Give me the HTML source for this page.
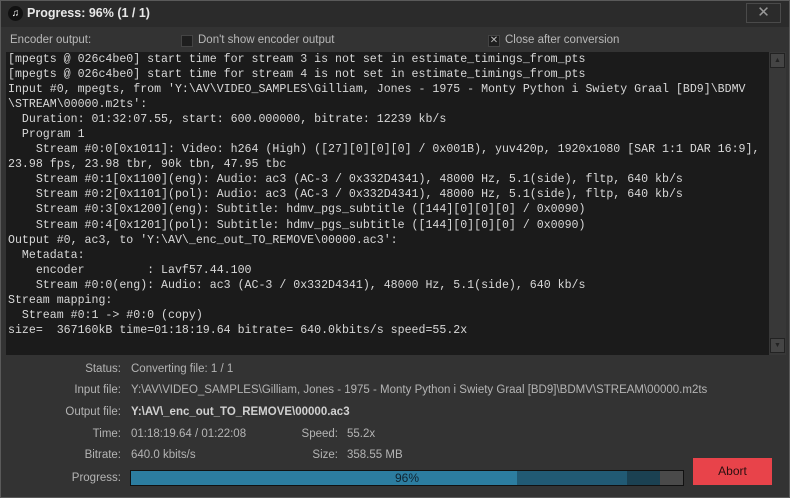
<!DOCTYPE html>
<html><head><style>
*{margin:0;padding:0;box-sizing:border-box}
body{width:790px;height:498px;background:#2e2e2e;font-family:"Liberation Sans",sans-serif;color:#c8c8c8;position:relative;overflow:hidden}
.win{position:absolute;left:0;top:0;width:790px;height:498px;border:1px solid #5a5a5a;background:#333}
.title{position:absolute;left:0;top:0;width:788px;height:26px;background:#2b2b2b}
.tt{position:absolute;left:26px;top:5px;font-size:12.5px;font-weight:bold;color:#e8e8e8}
.ico{position:absolute;left:7px;top:5px;width:15px;height:15px;border-radius:50%;background:#111;color:#fff;font-size:10px;text-align:center;line-height:15px}
.close{position:absolute;left:745px;top:2px;width:35px;height:20px;border:1px solid #4a4a4a;color:#999;text-align:center;font-size:15px;line-height:18px}
.lbl{position:absolute;font-size:11.5px;color:#b8b8b8}
.cb{position:absolute;width:12px;height:12px;background:#1e1e1e;border:1px solid #444}
.out{position:absolute;left:5px;top:51px;width:763px;height:303px;background:#1b1b1b;font-family:"Liberation Mono",monospace;font-size:11.6px;line-height:15.05px;color:#d8d8d8;padding:0 0 0 2px;white-space:pre}
.sb{position:absolute;left:768px;top:51px;width:17px;height:303px;background:#383838}
.sbb{position:absolute;left:1px;width:15px;height:15px;background:#454545;border:1px solid #222;color:#222;font-size:7px;text-align:center;line-height:13px}
.r{position:absolute;font-size:11.5px;color:#b4b4b4;text-align:right;width:120px;left:0}
.v{position:absolute;font-size:11.5px;color:#b4b4b4;left:130px}
.bar{position:absolute;left:129px;top:469px;width:554px;height:16px;border:1px solid #111;background:#4a4a4a}
.abort{position:absolute;left:692px;top:457px;width:79px;height:27px;background:#e8434a;color:#2a1010;font-size:12px;text-align:center;line-height:27px}
</style></head><body>
<div class="win">
<div class="title"><div class="ico">♫</div><div class="tt">Progress: 96% (1 / 1)</div><div class="close">✕</div></div>
<div class="lbl" style="left:9px;top:33px">Encoder output:</div>
<div class="cb" style="left:180px;top:34px"></div>
<div class="lbl" style="left:197px;top:33px">Don't show encoder output</div>
<div class="cb" style="left:487px;top:34px;color:#bbb;font-size:10px;line-height:10px;text-align:center">✕</div>
<div class="lbl" style="left:504px;top:33px">Close after conversion</div>
<div class="out">[mpegts @ 026c4be0] start time for stream 3 is not set in estimate_timings_from_pts
[mpegts @ 026c4be0] start time for stream 4 is not set in estimate_timings_from_pts
Input #0, mpegts, from 'Y:\AV\VIDEO_SAMPLES\Gilliam, Jones - 1975 - Monty Python i Swiety Graal [BD9]\BDMV
\STREAM\00000.m2ts':
  Duration: 01:32:07.55, start: 600.000000, bitrate: 12239 kb/s
  Program 1
    Stream #0:0[0x1011]: Video: h264 (High) ([27][0][0][0] / 0x001B), yuv420p, 1920x1080 [SAR 1:1 DAR 16:9],
23.98 fps, 23.98 tbr, 90k tbn, 47.95 tbc
    Stream #0:1[0x1100](eng): Audio: ac3 (AC-3 / 0x332D4341), 48000 Hz, 5.1(side), fltp, 640 kb/s
    Stream #0:2[0x1101](pol): Audio: ac3 (AC-3 / 0x332D4341), 48000 Hz, 5.1(side), fltp, 640 kb/s
    Stream #0:3[0x1200](eng): Subtitle: hdmv_pgs_subtitle ([144][0][0][0] / 0x0090)
    Stream #0:4[0x1201](pol): Subtitle: hdmv_pgs_subtitle ([144][0][0][0] / 0x0090)
Output #0, ac3, to 'Y:\AV\_enc_out_TO_REMOVE\00000.ac3':
  Metadata:
    encoder         : Lavf57.44.100
    Stream #0:0(eng): Audio: ac3 (AC-3 / 0x332D4341), 48000 Hz, 5.1(side), 640 kb/s
Stream mapping:
  Stream #0:1 -&gt; #0:0 (copy)
size=  367160kB time=01:18:19.64 bitrate= 640.0kbits/s speed=55.2x</div>
<div class="sb"><div class="sbb" style="top:1px">▲</div><div class="sbb" style="top:286px">▼</div></div>
<div class="r" style="top:362px">Status:</div><div class="v" style="top:362px">Converting file: 1 / 1</div>
<div class="r" style="top:383px">Input file:</div><div class="v" style="top:383px">Y:\AV\VIDEO_SAMPLES\Gilliam, Jones - 1975 - Monty Python i Swiety Graal [BD9]\BDMV\STREAM\00000.m2ts</div>
<div class="r" style="top:405px">Output file:</div><div class="v" style="top:405px;font-weight:bold;color:#d0d0d0">Y:\AV\_enc_out_TO_REMOVE\00000.ac3</div>
<div class="r" style="top:427px">Time:</div><div class="v" style="top:427px">01:18:19.64 / 01:22:08</div>
<div class="r" style="top:427px;left:217px">Speed:</div><div class="v" style="top:427px;left:346px">55.2x</div>
<div class="r" style="top:448px">Bitrate:</div><div class="v" style="top:448px">640.0 kbits/s</div>
<div class="r" style="top:448px;left:217px">Size:</div><div class="v" style="top:448px;left:346px">358.55 MB</div>
<div class="r" style="top:471px">Progress:</div>
<div class="bar">
<div style="position:absolute;left:0;top:0;width:386px;height:14px;background:#2c7da0"></div>
<div style="position:absolute;left:386px;top:0;width:110px;height:14px;background:#215a74"></div>
<div style="position:absolute;left:496px;top:0;width:33px;height:14px;background:#1b4152"></div>
<div style="position:absolute;left:0;top:0;width:552px;text-align:center;font-size:12px;line-height:14px;color:#0f2330">96%</div>
</div>
<div class="abort">Abort</div>
</div>
</body></html>
